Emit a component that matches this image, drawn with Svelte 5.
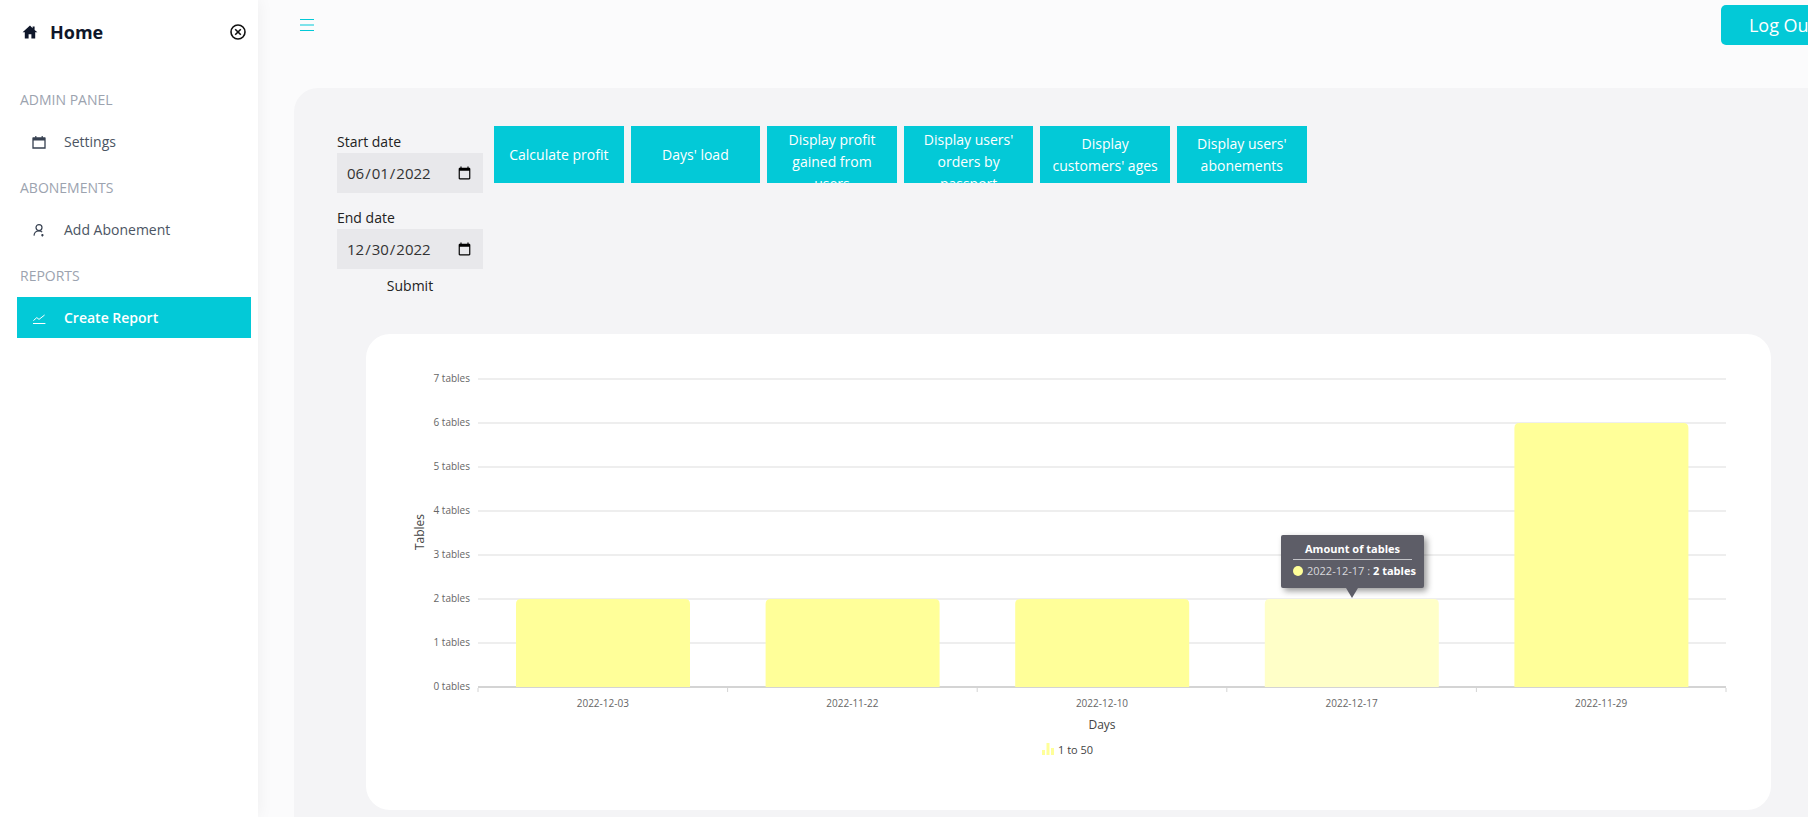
<script>
  const reportButtons = [
    "Calculate profit",
    "Days' load",
    "Display profit gained from users",
    "Display users' orders by passport",
    "Display customers' ages",
    "Display users' abonements"
  ]

  // y axis: one table is 44px, zero line at 687
  const zeroY = 687
  const stepY = 44
  const axisLeft = 478
  const bandWidth = 249.6
  const ticks = [0, 1, 2, 3, 4, 5, 6, 7]

  const bars = [
    { day: "2022-12-03", tables: 2 },
    { day: "2022-11-22", tables: 2 },
    { day: "2022-12-10", tables: 2 },
    { day: "2022-12-17", tables: 2, hovered: true },
    { day: "2022-11-29", tables: 6 }
  ]

  function barPath(i, tables) {
    const x = axisLeft + i * bandWidth + 38
    const w = 174
    const top = zeroY - tables * stepY
    const r = 5
    return `M${x} ${zeroY}V${top + r}Q${x} ${top} ${x + r} ${top}H${x + w - r}Q${x + w} ${top} ${x + w} ${top + r}V${zeroY}Z`
  }
</script>

<div class="page">
  <aside class="sidebar">
    <div class="brand">
      <a class="logo" href="#home">
        <svg width="16" height="16" viewBox="0 0 16 16"><path d="M8 1.5 .6 8.3h2.2V14.6h3.8v-4.4h2.8v4.4h3.8V8.3h2.2L12.6 6V2.4h-2v1.8z" fill="#0f172a" /></svg>
        <span>Home</span>
      </a>
      <svg class="close" width="18" height="18" viewBox="0 0 18 18" fill="none" stroke="#111" stroke-width="1.6">
        <circle cx="9" cy="9" r="7" />
        <path d="M6.2 6.2l5.6 5.6M11.8 6.2l-5.6 5.6" />
      </svg>
    </div>

    <p class="section first">ADMIN PANEL</p>
    <a class="item" href="#settings">
      <svg width="14" height="14" viewBox="0 0 14 14"><path d="M1 3.2h12V13H1z" fill="none" stroke="#374151" stroke-width="1.3" /><path d="M1 2.4h12v3H1zM3.2 1h1.2v2H3.2zM9.6 1h1.2v2H9.6z" fill="#374151" /></svg>
      Settings
    </a>
    <p class="section">ABONEMENTS</p>
    <a class="item" href="#abonement">
      <svg width="14" height="14" viewBox="0 0 14 14" fill="none" stroke="#374151" stroke-width="1.2"><circle cx="7" cy="4.6" r="3" /><path d="M2 12.6c.2-2.8 2.2-4.6 5-4.6 1.4 0 2.4.4 3.2 1.2M10.4 11v2.4M9.2 12.2h2.4" /></svg>
      Add Abonement
    </a>
    <p class="section">REPORTS</p>
    <a class="item active" href="#report">
      <svg width="14" height="14" viewBox="0 0 14 14" fill="none" stroke="#fff" stroke-width="1"><path d="M1 12.5h12.4M1.4 9.6l3.4-3 2.2 1.8 5.6-4.4" /></svg>
      Create Report
    </a>
  </aside>

  <main class="main">
    <header class="topbar">
      <button class="menu" aria-label="menu">
        <svg width="14" height="14" viewBox="0 0 14 14" stroke="#03c9d7" stroke-width="1.2"><path d="M0 1.5h14M0 7h14M0 12.5h14" /></svg>
      </button>
      <button class="logout">Log Out</button>
    </header>

    <section class="panel">
      <div class="controls">
        <form class="dates">
          <label for="start">Start date</label>
          <input id="start" type="date" value="2022-06-01" />
          <label for="end">End date</label>
          <input id="end" type="date" value="2022-12-30" />
          <button type="button" class="submit">Submit</button>
        </form>
        <div class="reports">
          {#each reportButtons as label}
            <button class="report">{label}</button>
          {/each}
        </div>
      </div>

      <div class="card">
        <svg class="chart" viewBox="366 334 1405 476" width="1405" height="476">
          {#each ticks as t}
            <line x1={axisLeft} x2="1726" y1={zeroY - t * stepY} y2={zeroY - t * stepY} stroke={t === 0 ? "#d4d4d4" : "#e8e8e8"} stroke-width={t === 0 ? 2 : 1.4} />
            <text x="470" y={zeroY - t * stepY + 3} text-anchor="end" class="tick">{t} tables</text>
          {/each}
          {#each [0, 1, 2, 3, 4, 5] as i}
            <line x1={axisLeft + i * bandWidth} x2={axisLeft + i * bandWidth} y1="688" y2="692" stroke="#d4d4d4" />
          {/each}
          {#each bars as bar, i}
            <path d={barPath(i, bar.tables)} fill={bar.hovered ? "#ffffc8" : "#ffff99"} />
            <text x={axisLeft + (i + 0.5) * bandWidth} y="707" text-anchor="middle" class="tick">{bar.day}</text>
          {/each}
          <text x="1102" y="729" text-anchor="middle" class="title">Days</text>
          <text transform="translate(424 532) rotate(-90)" text-anchor="middle" class="title">Tables</text>
          <path d="M1042 755v-5h3v5zM1046.500 755v-12h3v12zM1051 755v-7h3v7z" fill="#ffff99" />
          <text x="1058" y="754" class="legend">1 to 50</text>
        </svg>

        <div class="tooltip">
          <div class="tip-title">Amount of tables</div>
          <div class="tip-row">
            <i class="dot"></i>
            <span>2022-12-17 : <b>2 tables</b></span>
          </div>
        </div>
      </div>
    </section>
  </main>
</div>

<style>
  :global(body) {
    margin: 0;
    overflow: hidden;
    font-family: "Open Sans", "Liberation Sans", sans-serif;
  }

  .page {
    display: flex;
    width: 1879px;
    height: 817px;
    overflow: hidden;
    background: #fbfbfc;
  }

  .sidebar {
    flex: 0 0 258px;
    box-sizing: border-box;
    padding: 0 7px 0 17px;
    background: #fff;
    box-shadow: 0 0 16px rgba(0, 0, 0, 0.06);
    position: relative;
  }

  .brand {
    display: flex;
    align-items: center;
    justify-content: space-between;
    height: 64px;
    padding: 0 4px 0 5px;
  }

  .logo {
    display: flex;
    align-items: center;
    gap: 12px;
    font-size: 18px;
    font-weight: 700;
    color: #0f172a;
    text-decoration: none;
  }

  .section {
    margin: 0;
    height: 44px;
    display: flex;
    align-items: center;
    padding-left: 3px;
    font-size: 14px;
    color: #9ca3af;
  }

  .section.first {
    margin-top: 13px;
  }

  .item {
    display: flex;
    align-items: center;
    gap: 18px;
    height: 41px;
    padding-left: 15px;
    margin-bottom: 3px;
    font-size: 14px;
    color: #4b5563;
    text-decoration: none;
    box-sizing: border-box;
  }

  .item.active {
    background: #03c9d7;
    color: #fff;
    font-weight: 600;
  }

  .main {
    flex: 1;
    box-sizing: border-box;
    padding: 0 36px;
  }

  .topbar {
    display: flex;
    align-items: flex-start;
    justify-content: space-between;
    height: 88px;
  }

  .menu {
    margin: 18px 0 0 6px;
    padding: 0;
    border: none;
    background: none;
    display: block;
    line-height: 0;
  }

  .logout {
    margin-top: 5px;
    width: 122px;
    height: 40px;
    border: none;
    border-radius: 5px;
    background: #03c9d7;
    color: #fff;
    font: 18px "Open Sans", sans-serif;
  }

  .panel {
    height: 729px;
    box-sizing: border-box;
    padding: 38px 72px 0 43px;
    background: #f4f4f6;
    border-radius: 24px 24px 0 0;
  }

  .controls {
    display: flex;
    align-items: flex-start;
    gap: 11px;
    height: 208px;
  }

  .dates {
    display: flex;
    flex-direction: column;
    width: 146px;
    margin-top: 5px;
    font-size: 14px;
    line-height: 22px;
    color: #222;
  }

  .dates input {
    box-sizing: border-box;
    width: 146px;
    height: 40px;
    margin-bottom: 14px;
    padding: 0 9px;
    border: none;
    background: #e8e8eb;
    font: 15px "Open Sans", sans-serif;
    color: #333;
  }

  .dates input:last-of-type {
    margin-bottom: 6px;
  }

  .submit {
    border: none;
    padding: 0;
    background: none;
    font: 14px/22px "Open Sans", sans-serif;
    color: #222;
  }

  .reports {
    display: flex;
    gap: 7px;
  }

  .report {
    width: 129.6px;
    height: 57px;
    padding: 3px 6px;
    overflow: hidden;
    border: none;
    background: #03c9d7;
    color: #fff;
    font: 14px/22px "Open Sans", sans-serif;
  }

  .card {
    position: relative;
    margin-left: 29px;
    width: 1405px;
    height: 476px;
    background: #fff;
    border-radius: 24px;
  }

  .chart {
    display: block;
  }

  .tick {
    font-size: 10px;
    fill: #666;
  }

  .title {
    font-size: 12px;
    fill: #444;
  }

  .legend {
    font-size: 11px;
    fill: #444;
  }

  .tooltip {
    position: absolute;
    left: 915px;
    top: 201px;
    box-sizing: border-box;
    width: 143px;
    height: 53px;
    padding: 6px 12px 0;
    background: #5d5d67;
    border-radius: 2px;
    box-shadow: 3px 3px 6px rgba(0, 0, 0, 0.4);
    color: #fff;
    font-size: 11px;
    white-space: nowrap;
  }

  .tooltip::after {
    content: "";
    position: absolute;
    left: 65px;
    bottom: -10px;
    border-left: 6px solid transparent;
    border-right: 6px solid transparent;
    border-top: 10px solid #5d5d67;
  }

  .tip-title {
    padding-bottom: 3px;
    border-bottom: 1px solid #c4c4c8;
    text-align: center;
    font-weight: 700;
    line-height: 15px;
  }

  .tip-row {
    display: flex;
    align-items: center;
    gap: 4px;
    margin-top: 3px;
    line-height: 15px;
    color: #d8d8dc;
  }

  .tip-row b {
    color: #fff;
  }

  .dot {
    flex: none;
    width: 10px;
    height: 10px;
    border-radius: 50%;
    background: #ffff99;
  }
</style>
